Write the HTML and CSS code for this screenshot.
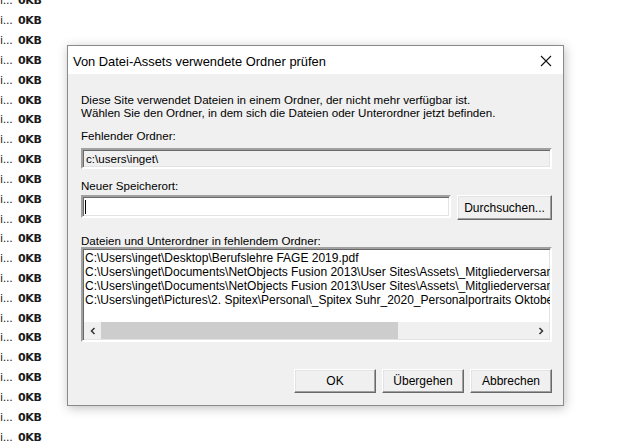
FILE: index.html
```html
<!DOCTYPE html>
<html lang="de">
<head>
<meta charset="utf-8">
<title>Ordner prüfen</title>
<link rel="stylesheet" href="styles.css">
</head>
<body>
<div class="bg-list">
  <div class="bg-row"><span class="name">i...</span><span class="size">0KB</span></div>
  <div class="bg-row"><span class="name">i...</span><span class="size">0KB</span></div>
  <div class="bg-row"><span class="name">i...</span><span class="size">0KB</span></div>
  <div class="bg-row"><span class="name">i...</span><span class="size">0KB</span></div>
  <div class="bg-row"><span class="name">i...</span><span class="size">0KB</span></div>
  <div class="bg-row"><span class="name">i...</span><span class="size">0KB</span></div>
  <div class="bg-row"><span class="name">i...</span><span class="size">0KB</span></div>
  <div class="bg-row"><span class="name">i...</span><span class="size">0KB</span></div>
  <div class="bg-row"><span class="name">i...</span><span class="size">0KB</span></div>
  <div class="bg-row"><span class="name">i...</span><span class="size">0KB</span></div>
  <div class="bg-row"><span class="name">i...</span><span class="size">0KB</span></div>
  <div class="bg-row"><span class="name">i...</span><span class="size">0KB</span></div>
  <div class="bg-row"><span class="name">i...</span><span class="size">0KB</span></div>
  <div class="bg-row"><span class="name">i...</span><span class="size">0KB</span></div>
  <div class="bg-row"><span class="name">i...</span><span class="size">0KB</span></div>
  <div class="bg-row"><span class="name">i...</span><span class="size">0KB</span></div>
  <div class="bg-row"><span class="name">i...</span><span class="size">0KB</span></div>
  <div class="bg-row"><span class="name">i...</span><span class="size">0KB</span></div>
  <div class="bg-row"><span class="name">i...</span><span class="size">0KB</span></div>
  <div class="bg-row"><span class="name">i...</span><span class="size">0KB</span></div>
  <div class="bg-row"><span class="name">i...</span><span class="size">0KB</span></div>
  <div class="bg-row"><span class="name">i...</span><span class="size">0KB</span></div>
  <div class="bg-row"><span class="name">i...</span><span class="size">0KB</span></div>
</div>

<div class="dialog">
  <div class="titlebar">
    <span class="title">Von Datei-Assets verwendete Ordner prüfen</span>
    <svg class="close" width="12" height="12" viewBox="0 0 12 12"><path d="M1 1 L11 11 M11 1 L1 11" stroke="#111" stroke-width="1.1" fill="none"/></svg>
  </div>
  <div class="content">
    <p class="msg">Diese Site verwendet Dateien in einem Ordner, der nicht mehr verfügbar ist.<br>Wählen Sie den Ordner, in dem sich die Dateien oder Unterordner jetzt befinden.</p>
    <div class="label l-missing">Fehlender Ordner:</div>
    <div class="field readonly">c:\users\inget\</div>
    <div class="label l-new">Neuer Speicherort:</div>
    <div class="input-row">
      <div class="field input"><span class="caret"></span></div>
      <div class="btn browse">Durchsuchen...</div>
    </div>
    <div class="label l-files">Dateien und Unterordner in fehlendem Ordner:</div>
    <div class="listbox">
      <div class="items">
        <div class="item">C:\Users\inget\Desktop\Berufslehre FAGE 2019.pdf</div>
        <div class="item">C:\Users\inget\Documents\NetObjects Fusion 2013\User Sites\Assets\_Mitgliederversammlung</div>
        <div class="item">C:\Users\inget\Documents\NetObjects Fusion 2013\User Sites\Assets\_Mitgliederversammlung</div>
        <div class="item">C:\Users\inget\Pictures\2. Spitex\Personal\_Spitex Suhr_2020_Personalportraits Oktober</div>
      </div>
      <div class="hscroll">
        <div class="arrow left"><svg width="8" height="8" viewBox="0 0 8 8"><path d="M5.5 1 L2.5 4 L5.5 7" stroke="#333" stroke-width="1.5" fill="none"/></svg></div>
        <div class="track"><div class="thumb"></div></div>
        <div class="arrow right"><svg width="8" height="8" viewBox="0 0 8 8"><path d="M2.5 1 L5.5 4 L2.5 7" stroke="#333" stroke-width="1.5" fill="none"/></svg></div>
      </div>
    </div>
    <div class="buttons">
      <div class="btn">OK</div>
      <div class="btn">Übergehen</div>
      <div class="btn">Abbrechen</div>
    </div>
  </div>
</div>
</body>
</html>
```

FILE: styles.css
```css
* { box-sizing: border-box; }
html, body { margin: 0; padding: 0; }
body {
  width: 626px;
  height: 448px;
  overflow: hidden;
  background: #fff;
  position: relative;
  font-family: "Liberation Sans", Arial, sans-serif;
}

/* background file list */
.bg-list {
  margin-top: -9px;
  display: flex;
  flex-direction: column;
}
.bg-row {
  height: 19.83px;
  display: flex;
  align-items: center;
  font-family: "DejaVu Sans", Verdana, sans-serif;
  font-size: 11px;
  color: #1b1b1b;
  white-space: nowrap;
}
.bg-row .name { width: 18px; letter-spacing: -0.3px; }
.bg-row .size { font-weight: bold; letter-spacing: -0.4px; }

/* dialog */
.dialog {
  position: absolute;
  left: 67px;
  top: 45px;
  width: 497px;
  height: 361px;
  background: #f0f0f0;
  border: 1px solid #8a8a8a;
  box-shadow: 1px 2px 10px rgba(0,0,0,0.25);
  display: flex;
  flex-direction: column;
}
.titlebar {
  height: 28px;
  background: #fff;
  display: flex;
  align-items: center;
  justify-content: space-between;
  padding: 0 11px 0 5px;
}
.title {
  font-size: 12.9px;
  color: #000;
  padding-top: 2px;
}
.close { display: block; margin-top: 2px; }

.content {
  flex: 1;
  display: flex;
  flex-direction: column;
  padding: 19px 11px 0 13px;
  font-size: 11.6px;
  color: #000;
}
.msg {
  margin: 0;
  line-height: 13px;
  font-size: 11.6px;
}
.label { line-height: 13px; }
.l-missing { margin-top: 10px; }
.l-new { margin-top: 10px; }
.l-files { margin-top: 14px; }

.field {
  border-style: solid;
  border-width: 2px;
  border-color: #a0a0a0 #fff #fff #a0a0a0;
  box-shadow: inset 1px 1px 0 #696969;
}
.readonly {
  margin-top: 6px;
  height: 21px;
  background: #f0f0f0;
  padding: 2px 0 0 3px;
  line-height: 14px;
  border-color: #a0a0a0 #fff #fff #a0a0a0;
  box-shadow: inset 1px 1px 0 #696969, inset -1px -1px 0 #e3e3e3;
}
.input-row {
  margin-top: 3px;
  display: flex;
  align-items: flex-start;
  gap: 6px;
}
.input {
  flex: 1;
  height: 23px;
  background: #fff;
  position: relative;
  box-shadow: inset 1px 1px 0 #696969, inset -1px -1px 0 #e3e3e3;
}
.caret {
  position: absolute;
  left: 2px;
  top: 3px;
  width: 1px;
  height: 14px;
  background: #000;
}

.btn {
  height: 25px;
  background: #f0f0f0;
  border: 1px solid;
  border-color: #fff #696969 #696969 #fff;
  box-shadow: inset -1px -1px 0 #a0a0a0, inset 1px 1px 0 #e3e3e3;
  display: flex;
  align-items: center;
  justify-content: center;
  font-size: 12px;
  color: #000;
  white-space: nowrap;
}
.browse { width: 95px; }

.listbox {
  margin-top: 0;
  height: 95px;
  background: #fff;
  border-style: solid;
  border-width: 2px;
  border-color: #a0a0a0 #fff #fff #a0a0a0;
  box-shadow: inset 1px 1px 0 #696969, inset -1px -1px 0 #e3e3e3;
  display: flex;
  flex-direction: column;
  overflow: hidden;
}
.items {
  flex: 1;
  padding: 2px 0 0 2px;
  overflow: hidden;
}
.item {
  line-height: 14px;
  font-size: 12px;
  white-space: nowrap;
}
.hscroll {
  height: 17px;
  margin: 0 1px 1px 1px;
  display: flex;
  background: #f0f0f0;
}
.arrow {
  width: 17px;
  display: flex;
  align-items: center;
  justify-content: center;
}
.track { flex: 1; display: flex; align-items: stretch; padding: 0; }
.thumb { width: 297px; background: #cdcdcd; }

.buttons {
  margin-top: 27px;
  display: flex;
  justify-content: flex-end;
  gap: 6px;
}
.buttons .btn { width: 82px; height: 24px; }
```
